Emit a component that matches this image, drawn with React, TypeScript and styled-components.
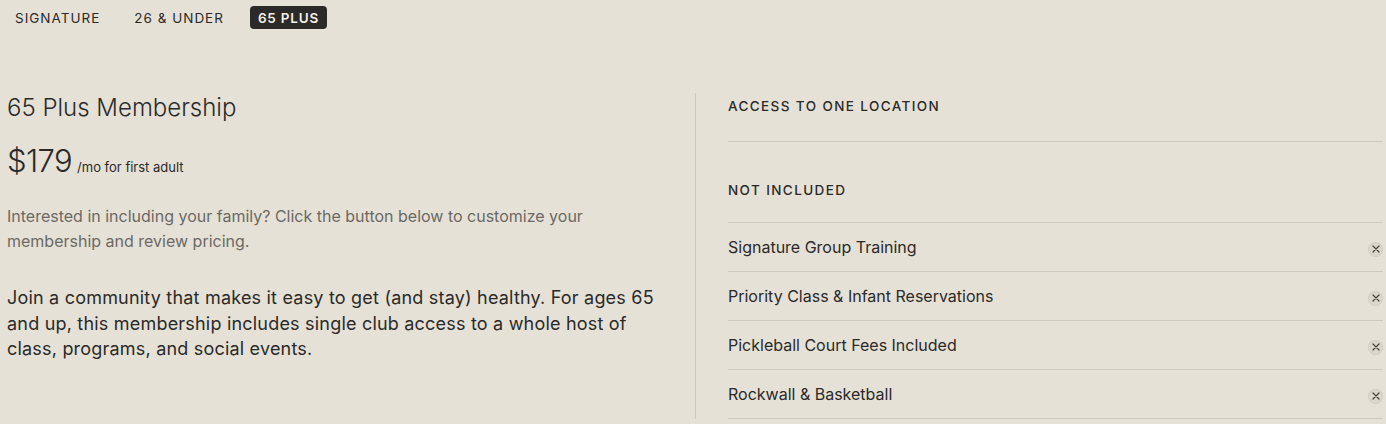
import React from 'react';
import styled, { createGlobalStyle } from 'styled-components';

const GlobalStyle = createGlobalStyle`
  body {
    margin: 0;
    background: #e5e1d7;
    font-family: 'Inter', 'Liberation Sans', sans-serif;
    color: #2b2a28;
  }
`;

const Page = styled.div`
  width: 1386px;
  height: 424px;
  overflow: hidden;
  background: #e5e1d7;
`;

const Tabs = styled.nav`
  display: flex;
  align-items: center;
  gap: 18px;
  padding: 6px 0 0 7px;
`;

const Tab = styled.button<{ $active?: boolean }>`
  font-family: inherit;
  font-size: 13.5px;
  text-transform: uppercase;
  border: none;
  border-radius: 4px;
  height: 23px;
  padding: 0 8px;
  cursor: pointer;
  background: ${(p) => (p.$active ? '#2b2a28' : 'transparent')};
  color: ${(p) => (p.$active ? '#f3efe7' : '#2b2a28')};
  font-weight: ${(p) => (p.$active ? 600 : 400)};
  letter-spacing: ${(p) => (p.$active ? '0.8px' : '1px')};
`;

const Content = styled.div`
  display: grid;
  grid-template-columns: 695px 1fr;
  margin-top: 64px;
`;

const Left = styled.section`
  padding: 0 30px 0 7px;
`;

const Title = styled.h2`
  margin: 0;
  font-size: 24px;
  font-weight: 300;
  line-height: 30px;
  color: #2b2a28;
`;

const PriceRow = styled.div`
  display: flex;
  align-items: baseline;
  gap: 5px;
  margin-top: 20px;
`;

const Price = styled.span`
  font-size: 31px;
  font-weight: 300;
  letter-spacing: -0.6px;
  line-height: 36px;
`;

const PriceNote = styled.span`
  font-size: 13px;
  color: #2b2a28;
`;

const Note = styled.p`
  margin: 25px 0 0;
  max-width: 610px;
  font-size: 16px;
  line-height: 25px;
  color: #6c6964;
`;

const Lead = styled.p`
  margin: 31px 0 0;
  font-size: 18px;
  letter-spacing: 0.2px;
  line-height: 25.5px;
  color: #2b2a28;
`;

const Right = styled.section`
  border-left: 1px solid #cdc8bd;
  padding: 0 3px 0 32px;
`;

const Heading = styled.div<{ $divided?: boolean }>`
  font-size: 13.5px;
  font-weight: 500;
  letter-spacing: 1.4px;
  text-transform: uppercase;
  padding: 3px 0 0;
  line-height: 20px;
  ${(p) => (p.$divided ? 'height: 45px; border-bottom: 1px solid #cfcabf;' : 'height: 42px; margin-top: 35px;')}
`;

const Divider = styled.hr`
  border: none;
  border-top: 1px solid #cfcabf;
  margin: 0;
`;

const Row = styled.div`
  display: flex;
  align-items: center;
  justify-content: space-between;
  height: 48px;
  border-bottom: 1px solid #cfcabf;
  font-size: 16px;
  color: #2b2a28;
`;

const Cross = styled.span`
  width: 15px;
  height: 15px;
  border-radius: 50%;
  background: #dcd7cc;
  box-shadow: inset 0 0 0 1px #d3cec3;
  display: flex;
  align-items: center;
  justify-content: center;
  margin-top: 4px;
`;

const CrossIcon = () => (
  <Cross>
    <svg width="8" height="8" viewBox="0 0 8 8">
      <path d="M1 1L7 7M7 1L1 7" stroke="#45433f" strokeWidth="1.2" strokeLinecap="round" />
    </svg>
  </Cross>
);

const excluded = [
  'Signature Group Training',
  'Priority Class & Infant Reservations',
  'Pickleball Court Fees Included',
  'Rockwall & Basketball',
];

export default function App() {
  return (
    <Page>
      <GlobalStyle />
      <Tabs>
        <Tab>Signature</Tab>
        <Tab>26 &amp; Under</Tab>
        <Tab $active>65 Plus</Tab>
      </Tabs>
      <Content>
        <Left>
          <Title>65 Plus Membership</Title>
          <PriceRow>
            <Price>$179</Price>
            <PriceNote>/mo for first adult</PriceNote>
          </PriceRow>
          <Note>
            Interested in including your family? Click the button below to customize your membership and review
            pricing.
          </Note>
          <Lead>
            Join a community that makes it easy to get (and stay) healthy. For ages 65 and up, this membership
            includes single club access to a whole host of class, programs, and social events.
          </Lead>
        </Left>
        <Right>
          <Heading $divided>Access to one location</Heading>
          <Heading>Not included</Heading>
          <Divider />
          {excluded.map((item) => (
            <Row key={item}>
              {item}
              <CrossIcon />
            </Row>
          ))}
        </Right>
      </Content>
    </Page>
  );
}
